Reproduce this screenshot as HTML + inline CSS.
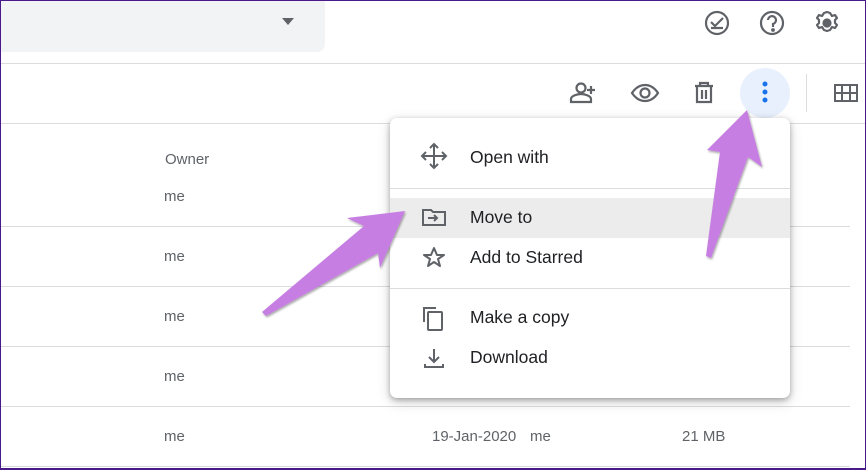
<!DOCTYPE html>
<html><head><meta charset="utf-8"><style>
*{margin:0;padding:0;box-sizing:border-box}
body{width:866px;height:470px;overflow:hidden;background:#fff;font-family:"Liberation Sans",Arial,sans-serif;position:relative}
.frame{position:absolute;inset:0;border:1px solid #4a1a8a;border-bottom-width:2px;pointer-events:none;z-index:20}
.search{position:absolute;left:0;top:0;width:325px;height:52px;background:#f1f3f4;border-radius:0 0 8px 0}
.hl{position:absolute;left:0;height:1px;background:#dadce0}
.t{position:absolute;color:#5f6368;font-size:15px}
.menu{position:absolute;left:390px;top:118px;width:400px;height:280px;background:#fff;border-radius:7px;box-shadow:0 2px 6px rgba(0,0,0,.3),0 4px 14px rgba(0,0,0,.15);z-index:5}
.mi{position:absolute;left:80px;font-size:17.5px;color:#202124}
.ic{position:absolute}
</style></head><body>
<div class="search"></div>
<svg class="ic" style="left:282px;top:18px" width="14" height="8"><path d="M0 0h12L6 7z" fill="#5f6368"/></svg>
<svg class="ic" style="left:700px;top:8px" width="150" height="32" fill="none" stroke="#5f6368" stroke-width="2.2">
<circle cx="17" cy="15" r="11"/><path d="M11 14l4 4 8-8M11 20h12"/>
<circle cx="72" cy="15" r="11"/><path d="M68 12a4 4 0 1 1 5 4v3"/><circle cx="73" cy="22" r=".8" fill="#5f6368"/>
<path d="M127 4l3 1 2 3 3-1 2 3-2 2 0 3 2 2-2 3-3-1-2 3-3 1-3-1-2-3-3 1-2-3 2-2 0-3-2-2 2-3 3 1 2-3z" stroke-linejoin="round"/><circle cx="127" cy="15" r="3.5" fill="#5f6368"/>
</svg>
<div class="hl" style="top:63px;width:866px"></div>
<div class="hl" style="top:123px;width:866px"></div>
<svg class="ic" style="left:568px;top:80px" width="298" height="30" fill="none" stroke="#5f6368" stroke-width="2.2">
<circle cx="13" cy="8" r="4.5"/><path d="M3 22v-3c0-3 6-5 10-5s10 2 10 5v3z"/><path d="M19 10h8M23 6v8"/>
<path d="M64 13c4-6 9-8 13-8s9 2 13 8c-4 6-9 8-13 8s-9-2-13-8z"/><circle cx="77" cy="13" r="4.5"/>
<path d="M127 6h18M132 6V3h8v3M129 6v16h14V6M134 10v9M138 10v9"/>
<path d="M267 5h22v16h-22zM267 13h22M274 5v16M282 5v16" stroke-width="2"/>
</svg>
<div style="position:absolute;left:740px;top:68px;width:50px;height:50px;border-radius:50%;background:#e8f0fe"></div>
<svg class="ic" style="left:760px;top:80px" width="10" height="26" fill="#1a73e8"><circle cx="5" cy="4" r="2.5"/><circle cx="5" cy="12" r="2.5"/><circle cx="5" cy="20" r="2.5"/></svg>
<div style="position:absolute;left:806px;top:74px;width:1px;height:38px;background:#dadce0"></div>
<div class="t" style="left:165px;top:151px;color:#5f6368;font-size:15px">Owner</div>
<div class="t" style="left:164px;top:188px">me</div>
<div class="t" style="left:164px;top:248px">me</div>
<div class="t" style="left:164px;top:308px">me</div>
<div class="t" style="left:164px;top:368px">me</div>
<div class="t" style="left:164px;top:428px">me</div>
<div class="t" style="left:432px;top:428px">19-Jan-2020</div>
<div class="t" style="left:530px;top:428px">me</div>
<div class="t" style="left:682px;top:428px">21 MB</div>
<div class="hl" style="top:226px;width:850px"></div>
<div class="hl" style="top:286px;width:850px"></div>
<div class="hl" style="top:346px;width:850px"></div>
<div class="hl" style="top:406px;width:850px"></div>
<div class="hl" style="top:466px;width:850px"></div>
<div class="menu">
<div style="position:absolute;left:0;top:70px;width:400px;height:1px;background:#dadce0"></div>
<div style="position:absolute;left:0;top:80px;width:400px;height:40px;background:#ececec"></div>
<div style="position:absolute;left:0;top:170px;width:400px;height:1px;background:#dadce0"></div>
<div class="mi" style="top:29px">Open with</div>
<div class="mi" style="top:89px">Move to</div>
<div class="mi" style="top:129px">Add to Starred</div>
<div class="mi" style="top:189px">Make a copy</div>
<div class="mi" style="top:229px">Download</div>
<svg class="ic" style="left:30px;top:24px" width="30" height="250" fill="none" stroke="#5f6368" stroke-width="2">
<path d="M14 3v22M3 14h22M10 6l4-4 4 4M10 22l4 4 4-4M6 10l-4 4 4 4M22 10l4 4-4 4"/>
<path d="M3 68h8l2 2h12v13H3z"/><path d="M8 76h9M14 73l3 3-3 3"/>
<path d="M14 106l3 7h7l-6 4 2 7-6-4-6 4 2-7-6-4h7z" stroke-linejoin="round"/>
<path d="M4 180v-14h12"/><rect x="8" y="170" width="14" height="18" rx="1"/>
<path d="M14 207v13M9 215l5 5 5-5M5 222v3h18v-3"/>
</svg>
</div>
<svg style="position:absolute;left:0;top:0;z-index:10" width="866" height="470">
<defs><filter id="s"><feDropShadow dx="1" dy="1.5" stdDeviation="1" flood-opacity=".35"/></filter></defs>
<path d="M262 312L364 226L347 218L405 211L380 268L378 253L266 316Z" fill="#c77ee3" filter="url(#s)" stroke-linejoin="round"/>
<path d="M706 256L720 152L707 150L747 110L762 167L748 157L711 258Z" fill="#c77ee3" filter="url(#s)"/>
</svg>
<div class="frame"></div>
</body></html>
